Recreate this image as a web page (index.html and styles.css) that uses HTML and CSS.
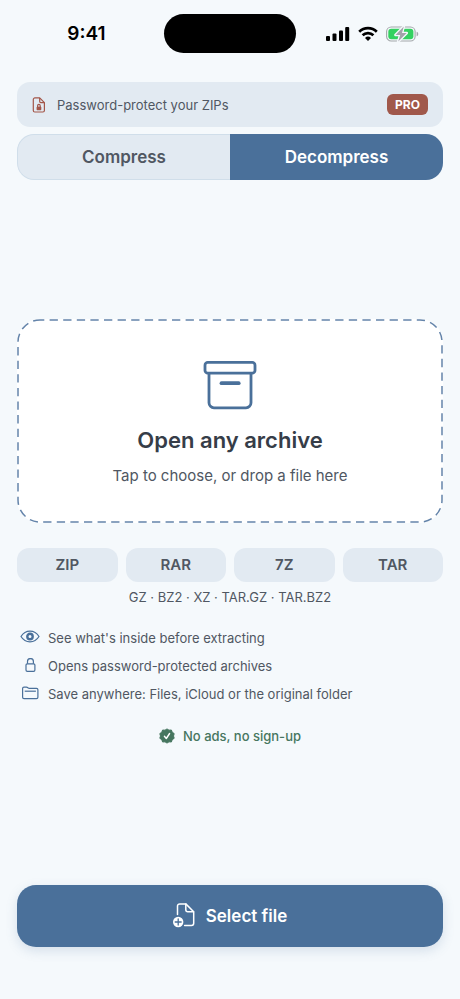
FILE: index.html
```html
<!DOCTYPE html>
<html lang="en">
<head>
<meta charset="utf-8">
<meta name="viewport" content="width=device-width, initial-scale=1">
<title>Decompress</title>
<link rel="stylesheet" href="styles.css">
</head>
<body>
<div class="app">
  <header class="status">
    <time class="clock">9:41</time>
    <div class="island"></div>
    <div class="indicators">
      <svg width="24" height="16" viewBox="0 0 24 16" aria-hidden="true"><rect x="0" y="10" width="4" height="5" rx="1"/><rect x="6.5" y="7.5" width="4" height="7.5" rx="1"/><rect x="13" y="4.500" width="4" height="10.500" rx="1"/><rect x="19.200" y="1" width="4" height="14" rx="1"/></svg>
      <svg width="20" height="16" viewBox="0 0 20 16" fill="none" stroke="#000" stroke-width="2.700" aria-hidden="true"><path d="M1.200 5.700a12.600 12.600 0 0 1 17.600 0"/><path d="M4.600 9.300a7.700 7.700 0 0 1 10.800 0"/><path d="M10 15l-3-3a4.300 4.300 0 0 1 6 0z" fill="#000" stroke="none"/></svg>
      <svg width="33" height="16" viewBox="0 0 33 16" aria-hidden="true"><rect x=".6" y="1" width="28.500" height="14" rx="4.600" fill="none" stroke="#a3a7aa" stroke-width="1.100"/><path d="M30.600 5.700c2.200.5 2.200 4.100 0 4.600z" fill="#a3a7aa"/><rect x="2.300" y="2.700" width="25.100" height="10.600" rx="3" fill="#34d160"/><path d="M17.800.5L9.500 9h4.700L12.200 15.500 20.700 7H16z" fill="#a3a3aa" stroke="#f5f9fc" stroke-width="2.600" stroke-linejoin="round" paint-order="stroke"/></svg>
    </div>
  </header>

  <a class="promo" href="#pro">
    <svg width="14" height="16" viewBox="0 0 14 16" fill="none" stroke="#a35649" stroke-width="1.200" stroke-linejoin="round" aria-hidden="true"><path d="M3 .9h4.700l4.700 4.700v7.900a1.500 1.500 0 0 1-1.500 1.500H2.800a1.500 1.500 0 0 1-1.500-1.500V2.500A1.600 1.600 0 0 1 3 .9z"/><path d="M7.700 1v3.600a1 1 0 0 0 1 1h3.600"/><path d="M5.600 10V8.700a1.300 1.300 0 0 1 2.600 0V10"/><rect x="4.900" y="9.900" width="4.100" height="3" rx=".3" fill="#a35649" stroke-width=".6"/></svg>
    <span class="promo-text">Password-protect your ZIPs</span>
    <span class="badge">PRO</span>
  </a>

  <nav class="tabs" aria-label="Mode">
    <button class="tab" type="button">Compress</button>
    <button class="tab active" type="button" aria-current="page">Decompress</button>
  </nav>

  <main class="content">
    <button class="drop" type="button">
      <svg class="dash" aria-hidden="true"><rect x="1" y="1" rx="22"/></svg>
      <svg width="54" height="50" viewBox="0 0 54 50" fill="none" stroke="#4a709a" stroke-width="2.800" stroke-linejoin="round" stroke-linecap="round" aria-hidden="true"><rect x="2" y="2.400" width="50" height="10.800" rx="2.800"/><path d="M6 13.500v29.300a5 5 0 0 0 5 5h32a5 5 0 0 0 5-5V13.500"/><path d="M18.500 23.200h17.200" stroke-width="3.800"/></svg>
      <strong class="drop-title">Open any archive</strong>
      <span class="drop-text">Tap to choose, or drop a file here</span>
    </button>

    <ul class="formats">
      <li>ZIP</li><li>RAR</li><li>7Z</li><li>TAR</li>
    </ul>
    <p class="more">GZ · BZ2 · XZ · TAR.GZ · TAR.BZ2</p>

    <ul class="features">
      <li><svg width="20" height="16" viewBox="0 0 20 16" fill="none" stroke="#4a709a" stroke-width="1.200" aria-hidden="true"><path d="M1 6.500C3 3.300 6.200 1.200 10 1.200s7 2.100 9 5.300c-2 3.200-5.200 5.300-9 5.300S3 9.700 1 6.500z"/><circle cx="10" cy="6.500" r="2.700" stroke-width="2.400"/></svg>See what's inside before extracting</li>
      <li><svg width="20" height="16" viewBox="0 0 20 16" fill="none" stroke="#4a709a" stroke-width="1.200" aria-hidden="true"><rect x="6" y="5.800" width="8.900" height="7.600" rx="1.300"/><path d="M7.500 5.700V3.500a2.950 2.950 0 0 1 5.900 0v2.200"/></svg>Opens password-protected archives</li>
      <li><svg width="20" height="16" viewBox="0 0 20 16" fill="none" stroke="#4a709a" stroke-width="1.200" stroke-linejoin="round" aria-hidden="true"><path d="M2.600 11.200V2.500c0-.9.500-1.400 1.400-1.400h2.500c1.300 0 1.500 1.300 2.800 1.300h7.200c.9 0 1.400.5 1.400 1.400v7.400c0 .9-.5 1.400-1.400 1.400H4c-.9 0-1.400-.5-1.400-1.400z"/><path d="M4.700 5.200h11.200"/></svg>Save anywhere: Files, iCloud or the original folder</li>
    </ul>

    <p class="trust"><svg width="16" height="16" viewBox="0 0 16 16" aria-hidden="true"><path d="M8 .9l2 1.300 2.400-.2.800 2.200 2 1.400L14.500 8l.7 2.300-2 1.400-.8 2.300-2.400-.2L8 15.100l-2-1.300-2.400.2-.8-2.300-2-1.400L1.500 8 .8 5.600l2-1.400L3.600 2l2.400.2z" fill="#46765f" stroke="#46765f" stroke-linejoin="round"/><path d="M5.400 8.200l1.900 2.300 3.300-5" fill="none" stroke="#fff" stroke-width="1.400" stroke-linecap="round" stroke-linejoin="round"/></svg>No ads, no sign-up</p>
  </main>

  <button class="select" type="button">
    <svg width="22" height="26" viewBox="1 0 22 26" fill="none" stroke="#fff" stroke-width="1.500" stroke-linejoin="round" stroke-linecap="round" aria-hidden="true"><path d="M5.500 11.500V3.100a2.200 2.200 0 0 1 2.200-2.200h6.100l7.900 7.900v11.400a2.200 2.200 0 0 1-2.200 2.200h-6.900"/><path d="M13.800 1.100v5.700a2 2 0 0 0 2 2h5.700"/><circle cx="6.200" cy="19" r="5.200" fill="#fff" stroke="none"/><path d="M6.200 16v6M3.200 19h6" stroke="#4a709a" stroke-width="1.300"/></svg>
    Select file
  </button>
</div>
</body>
</html>
```
FILE: styles.css
```css
* {
  box-sizing: border-box;
}

body {
  margin: 0;
  background: #f5f9fc;
  color: #505762;
  font-family: Inter, "Liberation Sans", sans-serif;
}

button {
  border: 0;
  padding: 0;
  font: inherit;
  color: inherit;
  cursor: pointer;
}

ul,
p {
  margin: 0;
  padding: 0;
  list-style: none;
}

svg {
  flex: none;
}

.app {
  display: flex;
  flex-direction: column;
  min-height: 100vh;
  padding: 0 17px 52px;
}

.status {
  display: grid;
  grid-template-columns: 1fr 132px 1fr;
  align-items: center;
  padding: 14px 0 29px;
  color: #000;
}

.clock {
  padding-right: 8px;
  font-size: 19px;
  font-weight: 600;
  text-align: center;
}

.island {
  height: 39px;
  border-radius: 20px;
  background: #000;
}

.indicators {
  display: flex;
  justify-content: center;
  gap: 8px;
  padding-left: 5px;
}

.promo {
  display: flex;
  align-items: center;
  gap: 11px;
  min-height: 45px;
  padding: 0 15px;
  border-radius: 13px;
  background: #e2eaf2;
  color: inherit;
  font-size: 13px;
  text-decoration: none;
}

.promo-text {
  flex: 1;
}

.badge {
  padding: 3px 8px;
  border-radius: 6px;
  background: #a0584b;
  color: #fff;
  font-size: 12px;
  font-weight: 700;
  line-height: 15px;
}

.tabs {
  display: grid;
  grid-template-columns: 1fr 1fr;
  margin-top: 7px;
}

.tab {
  min-height: 46px;
  border: 1px solid #d0deea;
  border-right: 0;
  border-radius: 17px 0 0 17px;
  background: #e2eaf2;
  font-size: 17px;
  font-weight: 600;
}

.tab.active {
  border: 0;
  border-radius: 0 17px 17px 0;
  background: #4a709a;
  color: #fff;
}

.content {
  display: flex;
  flex: 1;
  flex-direction: column;
  justify-content: center;
}

.drop {
  position: relative;
  display: flex;
  flex-direction: column;
  align-items: center;
  padding: 41px 16px 37px;
  border-radius: 23px;
  background: #fff;
}

.dash {
  position: absolute;
  inset: 0;
  width: 100%;
  height: 100%;
}

.dash rect {
  width: calc(100% - 2px);
  height: calc(100% - 2px);
  fill: none;
  stroke: #6484aa;
  stroke-width: 1.5;
  stroke-dasharray: 8.3 5.3;
  stroke-dashoffset: 4;
}

.drop-title {
  margin-top: 16px;
  color: #363d48;
  font-size: 22px;
  font-weight: 600;
  line-height: 28px;
}

.drop-text {
  margin-top: 12px;
  font-size: 15px;
  line-height: 20px;
}

.formats {
  display: grid;
  grid-template-columns: repeat(4, 1fr);
  gap: 8px;
  margin-top: 25px;
}

.formats li {
  border-radius: 12px;
  background: #e2eaf2;
  font-size: 15px;
  font-weight: 600;
  line-height: 34px;
  text-align: center;
}

.more {
  margin-top: 6px;
  font-size: 13px;
  line-height: 18px;
  text-align: center;
}

.features {
  display: grid;
  gap: 8px;
  margin-top: 22px;
  padding-left: 3px;
}

.features li {
  display: flex;
  align-items: center;
  gap: 8px;
  font-size: 13px;
  line-height: 20px;
}

.trust {
  display: flex;
  align-items: center;
  justify-content: center;
  gap: 8px;
  margin: 23px 0 2px;
  color: #46765f;
  font-size: 13px;
  font-weight: 500;
  line-height: 18px;
}

.select {
  display: flex;
  align-items: center;
  justify-content: center;
  gap: 11px;
  min-height: 62px;
  border-radius: 19px;
  background: #4a709a;
  box-shadow: 0 4px 12px rgb(74 112 154 / 18%);
  color: #fff;
  font-size: 17px;
  font-weight: 600;
}
```
